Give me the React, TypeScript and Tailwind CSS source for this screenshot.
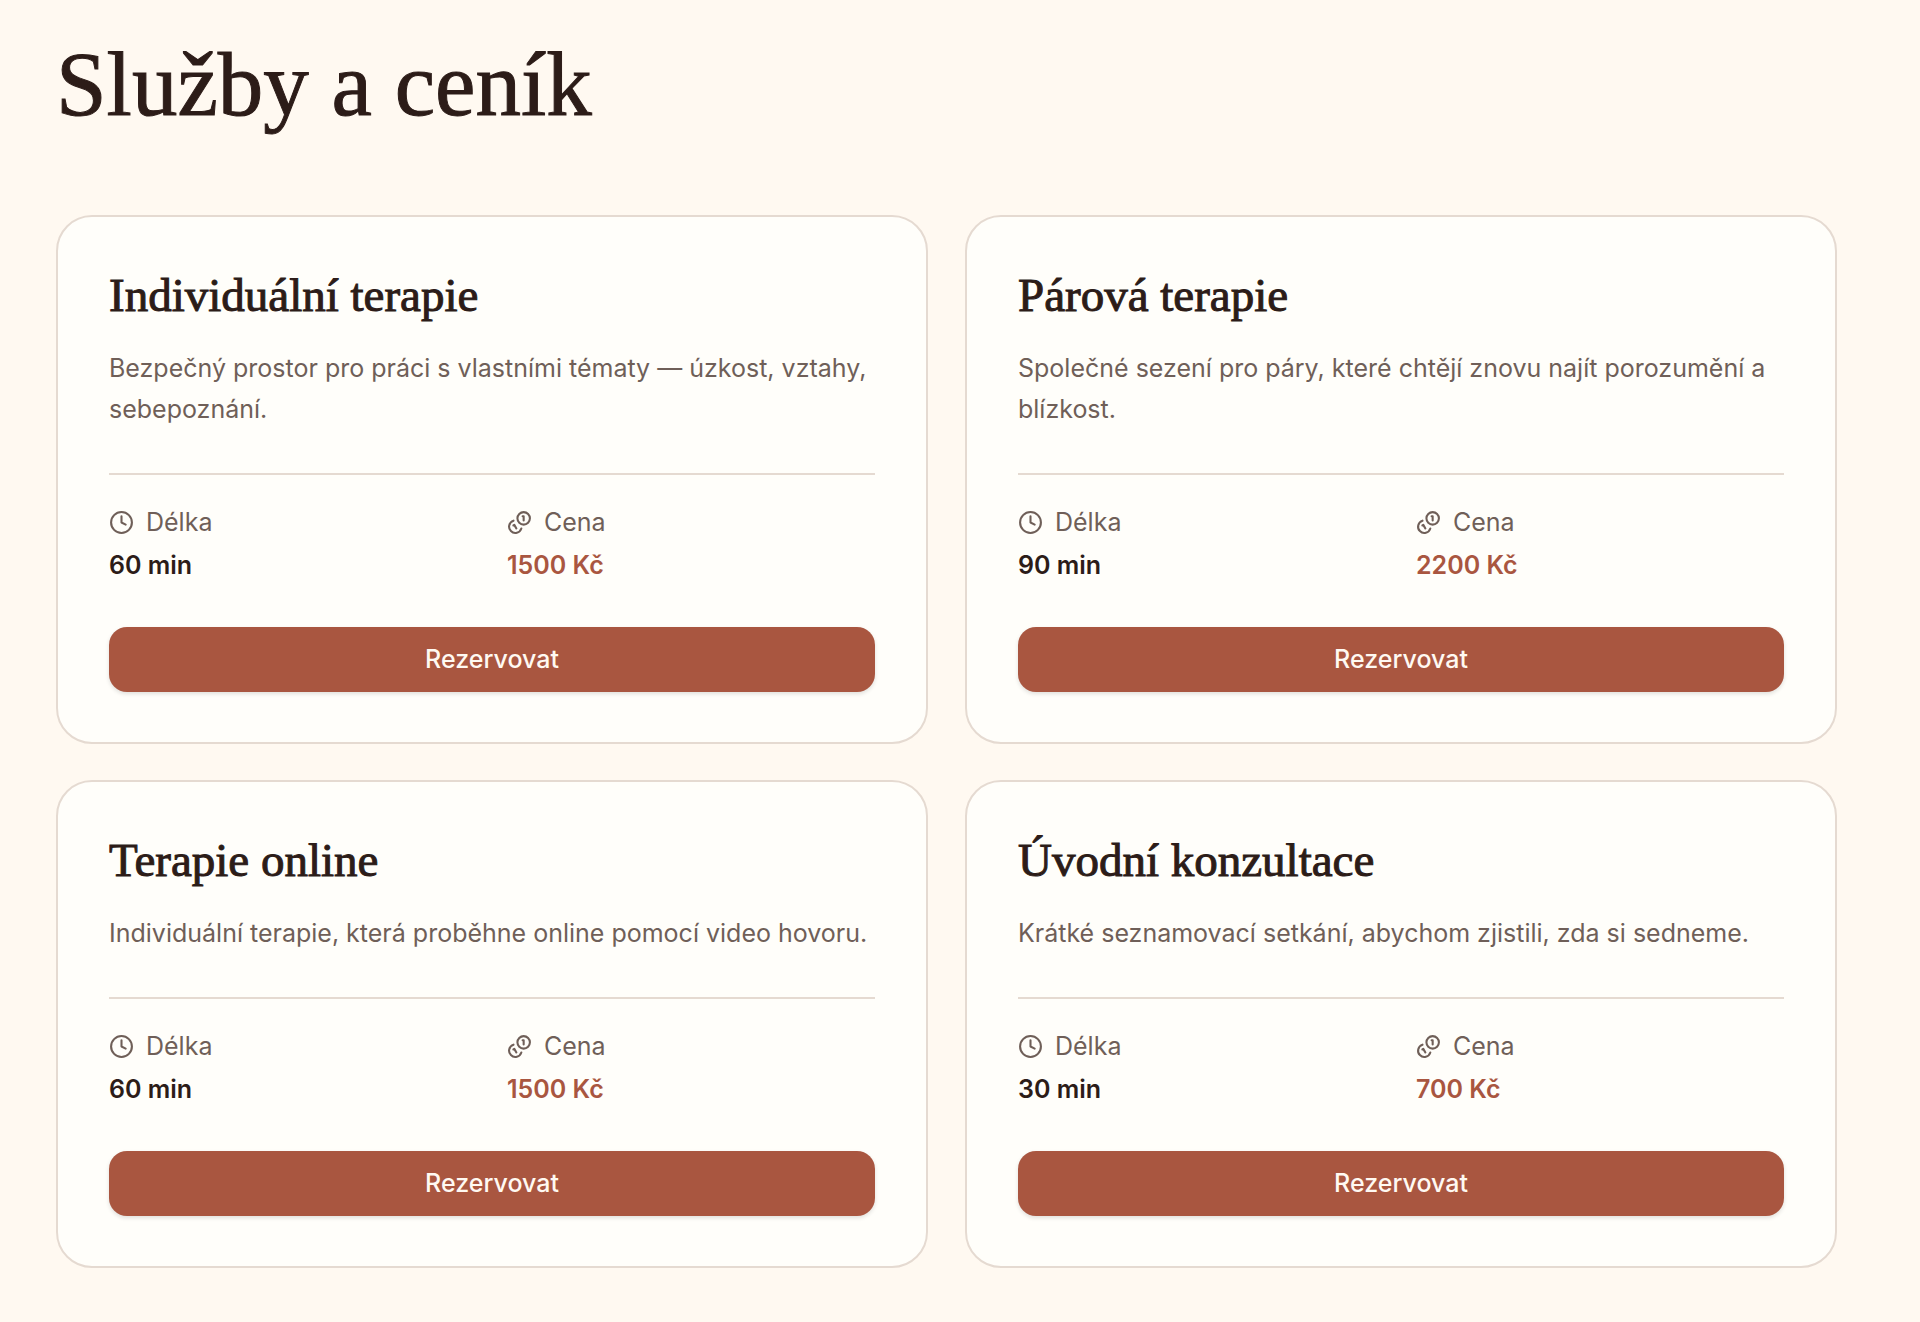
import React from "react";
import { Clock } from "lucide-react";

type Service = {
  title: string;
  description: string;
  duration: string;
  price: string;
};

const services: Service[] = [
  {
    title: "Individuální terapie",
    description:
      "Bezpečný prostor pro práci s vlastními tématy — úzkost, vztahy, sebepoznání.",
    duration: "60 min",
    price: "1500 Kč",
  },
  {
    title: "Párová terapie",
    description:
      "Společné sezení pro páry, které chtějí znovu najít porozumění a blízkost.",
    duration: "90 min",
    price: "2200 Kč",
  },
  {
    title: "Terapie online",
    description: "Individuální terapie, která proběhne online pomocí video hovoru.",
    duration: "60 min",
    price: "1500 Kč",
  },
  {
    title: "Úvodní konzultace",
    description: "Krátké seznamovací setkání, abychom zjistili, zda si sedneme.",
    duration: "30 min",
    price: "700 Kč",
  },
];

function CoinsIcon() {
  return (
    <svg
      className="size-[25px]"
      viewBox="0 0 24 24"
      fill="none"
      stroke="currentColor"
      strokeWidth="2"
      strokeLinecap="round"
      strokeLinejoin="round"
      aria-hidden="true"
    >
      <circle cx="16" cy="8" r="6" />
      <path d="M13.744 17.736a6 6 0 1 1-7.48-7.48" />
      <path d="M15 6h1v4" />
      <path d="m6.134 14.768.866-.5 2 3.464" />
    </svg>
  );
}

function ServiceCard({ title, description, duration, price }: Service) {
  return (
    <article className="flex flex-col rounded-[36px] border-2 border-[#e5dad1] bg-[#fffefa] px-[51px] py-[50px]">
      <h2 className="font-['Liberation_Serif',serif] text-[47px] leading-[56px] font-medium text-[#2c1c18] [-webkit-text-stroke:1px]">
        {title}
      </h2>
      <p className="mt-[25px] text-[25px] leading-[41px] text-[#6f5f58]">{description}</p>
      <dl className="mt-[43px] grid grid-cols-2 gap-[30px] border-t-2 border-[#e5dad1] pt-7">
        <div>
          <dt className="flex items-center gap-3 text-[25px] leading-[38px] text-[#6f5f58]">
            <Clock size={25} strokeWidth={2} aria-hidden="true" />
            Délka
          </dt>
          <dd className="mt-[5px] text-[25px] leading-[38px] font-semibold text-[#2c1c18]">{duration}</dd>
        </div>
        <div>
          <dt className="flex items-center gap-3 text-[25px] leading-[38px] text-[#6f5f58]">
            <CoinsIcon />
            Cena
          </dt>
          <dd className="mt-[5px] text-[25px] leading-[38px] font-semibold text-[#a95640]">{price}</dd>
        </div>
      </dl>
      <button
        type="button"
        className="mt-[43px] h-[65px] w-full rounded-[18px] bg-[#a95640] text-[25px] font-medium text-[#fff9f2] shadow-[0_2px_4px_rgba(0,0,0,0.12)]"
      >
        Rezervovat
      </button>
    </article>
  );
}

export default function App() {
  return (
    <main className="min-h-screen bg-[#fff9f1] pt-[29px] pr-[83px] pb-[54px] pl-14 font-[Inter,sans-serif]">
      <h1 className="font-['Liberation_Serif',serif] text-[91px] leading-[112px] font-medium text-[#2c1c18] [-webkit-text-stroke:1px]">
        Služby a ceník
      </h1>
      <section className="mt-[74px] grid grid-cols-2 gap-x-[37px] gap-y-9">
        {services.map((service) => (
          <ServiceCard key={service.title} {...service} />
        ))}
      </section>
    </main>
  );
}
